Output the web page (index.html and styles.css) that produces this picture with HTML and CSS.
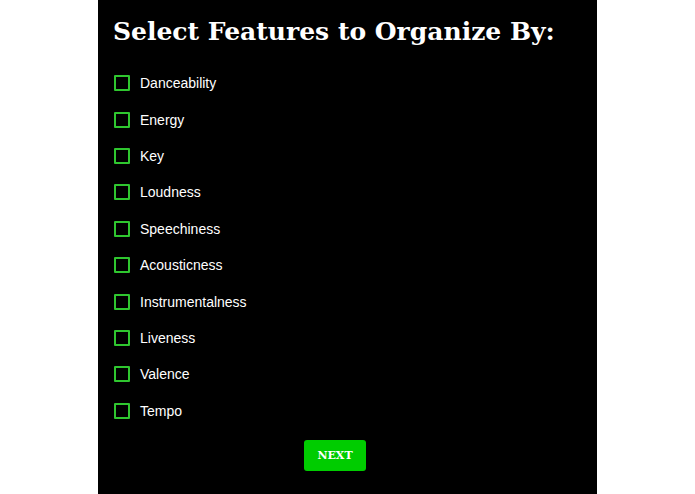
FILE: index.html
```html
<!DOCTYPE html>
<html lang="en">
<head>
    <meta charset="UTF-8">
    <title>Select Features</title>
    <link rel="stylesheet" href="styles.css">
</head>
<body>
    <div class="panel">
        <h1>Select Features to Organize By:</h1>
        <ul class="features">
            <li><span class="box"></span>Danceability</li>
            <li><span class="box"></span>Energy</li>
            <li><span class="box"></span>Key</li>
            <li><span class="box"></span>Loudness</li>
            <li><span class="box"></span>Speechiness</li>
            <li><span class="box"></span>Acousticness</li>
            <li><span class="box"></span>Instrumentalness</li>
            <li><span class="box"></span>Liveness</li>
            <li><span class="box"></span>Valence</li>
            <li><span class="box"></span>Tempo</li>
        </ul>
        <div class="actions">
            <button class="next">NEXT</button>
        </div>
    </div>
</body>
</html>
```

FILE: styles.css
```css
html, body {
    margin: 0;
    padding: 0;
    height: 100%;
    background: #fff;
}
.panel {
    box-sizing: border-box;
    width: 499px;
    height: 494px;
    margin-left: 98px;
    padding: 14px 15px 0;
    background: #000;
    color: #fff;
    overflow: hidden;
}
h1 {
    margin: 0;
    font-family: 'DejaVu Serif', Georgia, serif;
    font-weight: bold;
    font-size: 25px;
    line-height: 36px;
    white-space: nowrap;
}
.features {
    list-style: none;
    margin: 15px 0 0;
    padding: 0;
}
.features li {
    display: flex;
    align-items: center;
    height: 36.4px;
    font-family: 'Liberation Sans', Arial, sans-serif;
    font-size: 14px;
}
.box {
    box-sizing: border-box;
    width: 16px;
    height: 16px;
    margin: 0 10px 0 1px;
    border: 2px solid #2fc62f;
    border-radius: 1px;
}
.actions {
    display: flex;
    justify-content: center;
    padding-right: 25px;
    margin-top: 11px;
}
.next {
    width: 62px;
    height: 31px;
    border: none;
    border-radius: 3px;
    background: #00cc00;
    color: #fff;
    font-family: 'DejaVu Serif', Georgia, serif;
    font-weight: bold;
    font-size: 11px;
    cursor: pointer;
}
```
